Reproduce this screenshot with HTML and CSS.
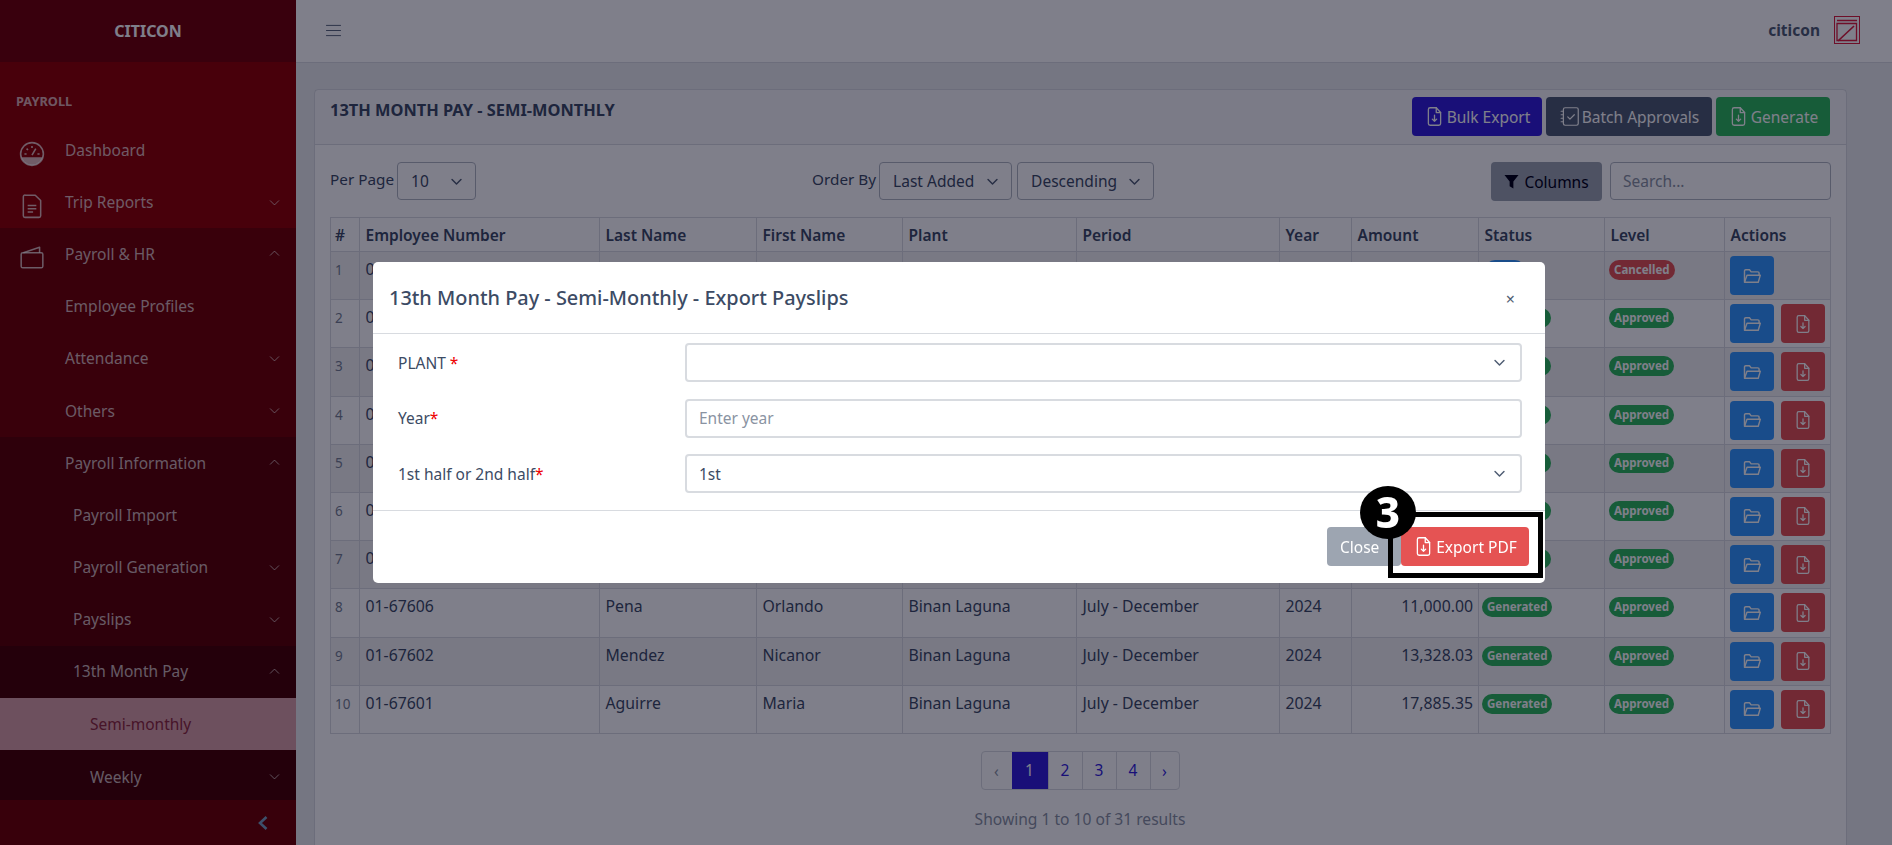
FILE: index.html
```html
<!DOCTYPE html>
<html lang="en">
<head>
<meta charset="utf-8">
<title>13th Month Pay - Semi-Monthly</title>
<link rel="stylesheet" href="styles.css">
</head>
<body>
<svg class="defs" aria-hidden="true">
  <symbol id="i-down" viewBox="0 0 16 16"><path d="M2.500 5.500 8 11l5.500-5.500" fill="none" stroke="currentColor" stroke-width="1.100"/></symbol>
  <symbol id="i-up" viewBox="0 0 16 16"><path d="M2.500 10.500 8 5l5.500 5.500" fill="none" stroke="currentColor" stroke-width="1.100"/></symbol>
  <symbol id="i-sel" viewBox="0 0 16 16"><path d="M2.500 5.500 8 11l5.500-5.500" fill="none" stroke="currentColor" stroke-width="1.800" stroke-linecap="round" stroke-linejoin="round"/></symbol>
  <symbol id="i-file" viewBox="0 0 24 24"><g fill="none" stroke="currentColor" stroke-width="1.500" stroke-linejoin="round" stroke-linecap="round"><path d="M7 2h7l5 5.500V20a2 2 0 0 1-2 2H7a2 2 0 0 1-2-2V4a2 2 0 0 1 2-2z"/><path d="M14 2v5.500h5"/><path d="M12 10.500v7M9.500 15l2.500 2.500 2.500-2.500"/></g></symbol>
  <symbol id="i-folder" viewBox="0 0 24 24"><g fill="none" stroke="currentColor" stroke-width="1.700" stroke-linejoin="round"><path d="M3 19V6a1.500 1.500 0 0 1 1.500-1.500H9l2 2.500h8a1.500 1.500 0 0 1 1.500 1.500V11"/><path d="M3 19.500 6 11h16l-2.500 8.500z"/></g></symbol>
</svg>

<div class="app">
  <aside class="sidebar">
    <div class="brand">CITICON</div>
    <nav class="nav">
      <div class="nav-title">PAYROLL</div>
      <a class="nav-item nav-top">
        <svg class="nav-icon" viewBox="0 0 24 24"><circle cx="12" cy="12" r="10.500" fill="none" stroke="currentColor" stroke-width="1.500"/><path d="M2 15h20a10.500 10.500 0 0 1-20 0z" fill="currentColor"/><path d="M12 13 15.500 7M5 12H7M12 4.500v2M19 12h-2M7 7l1.300 1.300" stroke="currentColor" stroke-width="1.500" fill="none"/></svg>
        <span class="nav-label">Dashboard</span>
      </a>
      <a class="nav-item nav-top">
        <svg class="nav-icon" viewBox="0 0 24 24"><g fill="none" stroke="currentColor" stroke-width="1.400" stroke-linejoin="round"><path d="M6 2h9l5 5v14a1.500 1.500 0 0 1-1.500 1.500h-13A1.500 1.500 0 0 1 4 21V3.500A1.500 1.500 0 0 1 6 2z"/><path d="M8 11.500h8M8 14.500h8M8 17.500h5"/></g></svg>
        <span class="nav-label">Trip Reports</span>
        <svg class="nav-chev"><use href="#i-down"/></svg>
      </a>
      <div class="nav-group">
        <a class="nav-item">
          <svg class="nav-icon" viewBox="0 0 24 24"><g fill="none" stroke="currentColor" stroke-width="1.400" stroke-linejoin="round"><rect x="2" y="8" width="20" height="14" rx="1.500"/><path d="M4 8 19 3v5"/></g></svg>
          <span class="nav-label">Payroll &amp; HR</span>
          <svg class="nav-chev"><use href="#i-up"/></svg>
        </a>
        <a class="nav-item"><span class="nav-label indent-1">Employee Profiles</span></a>
        <a class="nav-item"><span class="nav-label indent-1">Attendance</span><svg class="nav-chev"><use href="#i-down"/></svg></a>
        <a class="nav-item"><span class="nav-label indent-1">Others</span><svg class="nav-chev"><use href="#i-down"/></svg></a>
        <div class="nav-group">
          <a class="nav-item"><span class="nav-label indent-1">Payroll Information</span><svg class="nav-chev"><use href="#i-up"/></svg></a>
          <a class="nav-item"><span class="nav-label indent-2">Payroll Import</span></a>
          <a class="nav-item"><span class="nav-label indent-2">Payroll Generation</span><svg class="nav-chev"><use href="#i-down"/></svg></a>
          <a class="nav-item"><span class="nav-label indent-2">Payslips</span><svg class="nav-chev"><use href="#i-down"/></svg></a>
          <div class="nav-group">
            <a class="nav-item"><span class="nav-label indent-2">13th Month Pay</span><svg class="nav-chev"><use href="#i-up"/></svg></a>
            <a class="nav-item active"><span class="nav-label indent-3">Semi-monthly</span></a>
            <a class="nav-item nav-last"><span class="nav-label indent-3">Weekly</span><svg class="nav-chev"><use href="#i-down"/></svg></a>
          </div>
        </div>
      </div>
    </nav>
    <div class="side-foot">
      <svg class="side-toggle" viewBox="0 0 12 16"><path d="M9.500 2 3 8l6.500 6" fill="none" stroke="currentColor" stroke-width="2.600"/></svg>
    </div>
  </aside>

  <div class="main">
    <header class="topbar">
      <svg class="burger" viewBox="0 0 16 14"><path d="M0 1.500h16M0 7h16M0 12.500h16" stroke="currentColor" stroke-width="1"/></svg>
      <div class="top-right">
        <span class="top-user">citicon</span>
        <svg class="logo" viewBox="0 0 26 28"><g fill="none" stroke="#dc1e3c"><rect x=".5" y=".5" width="25" height="27" stroke-width="1"/><path d="M3 4.500h20M3 7.500h19.500V24.500H3z" stroke-width="1.300"/><path d="M4 25 20 10" stroke-width="1.700"/></g></svg>
      </div>
    </header>

    <div class="content">
      <section class="card">
        <div class="card-head">
          <h1 class="card-title">13TH MONTH PAY - SEMI-MONTHLY</h1>
          <div class="head-btns">
            <button class="btn btn-primary"><svg class="btn-icon"><use href="#i-file"/></svg>Bulk Export</button>
            <button class="btn btn-dark">
              <svg class="btn-icon" viewBox="0 0 24 24"><g fill="none" stroke="currentColor" stroke-width="1.400" stroke-linejoin="round" stroke-linecap="round"><rect x="5" y="2" width="17" height="20" rx="2"/><path d="M2.500 6h2M2.500 10h2M2.500 14h2M2.500 18h2"/><path d="m10 12.500 2.500 2.500 5-5"/></g></svg>
              Batch Approvals</button>
            <button class="btn btn-success"><svg class="btn-icon"><use href="#i-file"/></svg>Generate</button>
          </div>
        </div>
        <div class="card-body">
          <div class="toolbar">
            <div class="tool-group">
              <span class="tool-label">Per Page</span>
              <div class="mini-select sel-per"><span>10</span><svg class="sel-chev"><use href="#i-sel"/></svg></div>
            </div>
            <div class="tool-group tool-order">
              <span class="tool-label">Order By</span>
              <div class="mini-select sel-order"><span>Last Added</span><svg class="sel-chev"><use href="#i-sel"/></svg></div>
              <div class="mini-select sel-dir"><span>Descending</span><svg class="sel-chev"><use href="#i-sel"/></svg></div>
            </div>
            <div class="tool-group tool-right">
              <button class="btn btn-columns"><svg class="btn-icon funnel" viewBox="0 0 16 16"><path d="M.5 1h15L10 8v7.500L6 13V8z" fill="currentColor"/></svg>Columns</button>
              <div class="search">Search...</div>
            </div>
          </div>

          <table class="grid">
            <colgroup>
              <col class="c-num"><col class="c-emp"><col class="c-last"><col class="c-first"><col class="c-plant"><col class="c-period"><col class="c-year"><col class="c-amt"><col class="c-status"><col class="c-level"><col class="c-act">
            </colgroup>
            <thead>
              <tr><th class="th-num">#</th><th>Employee Number</th><th>Last Name</th><th>First Name</th><th>Plant</th><th>Period</th><th>Year</th><th>Amount</th><th>Status</th><th>Level</th><th>Actions</th></tr>
            </thead>
            <tbody>
              <tr><td class="idx">1</td><td>0</td><td></td><td></td><td></td><td></td><td></td><td></td><td class="pill-cell"><span class="pill pill-blue pill-stub-blue"></span></td><td class="pill-cell"><span class="pill pill-red">Cancelled</span></td><td class="actions"><button class="act act-blue"><svg><use href="#i-folder"/></svg></button></td></tr>
              <tr><td class="idx">2</td><td>0</td><td></td><td></td><td></td><td></td><td></td><td></td><td class="pill-cell"><span class="pill pill-green pill-stub"></span></td><td class="pill-cell"><span class="pill pill-green">Approved</span></td><td class="actions"><button class="act act-blue"><svg><use href="#i-folder"/></svg></button><button class="act act-red"><svg><use href="#i-file"/></svg></button></td></tr>
              <tr><td class="idx">3</td><td>0</td><td></td><td></td><td></td><td></td><td></td><td></td><td class="pill-cell"><span class="pill pill-green pill-stub"></span></td><td class="pill-cell"><span class="pill pill-green">Approved</span></td><td class="actions"><button class="act act-blue"><svg><use href="#i-folder"/></svg></button><button class="act act-red"><svg><use href="#i-file"/></svg></button></td></tr>
              <tr><td class="idx">4</td><td>0</td><td></td><td></td><td></td><td></td><td></td><td></td><td class="pill-cell"><span class="pill pill-green pill-stub"></span></td><td class="pill-cell"><span class="pill pill-green">Approved</span></td><td class="actions"><button class="act act-blue"><svg><use href="#i-folder"/></svg></button><button class="act act-red"><svg><use href="#i-file"/></svg></button></td></tr>
              <tr><td class="idx">5</td><td>0</td><td></td><td></td><td></td><td></td><td></td><td></td><td class="pill-cell"><span class="pill pill-green pill-stub"></span></td><td class="pill-cell"><span class="pill pill-green">Approved</span></td><td class="actions"><button class="act act-blue"><svg><use href="#i-folder"/></svg></button><button class="act act-red"><svg><use href="#i-file"/></svg></button></td></tr>
              <tr><td class="idx">6</td><td>0</td><td></td><td></td><td></td><td></td><td></td><td></td><td class="pill-cell"><span class="pill pill-green pill-stub"></span></td><td class="pill-cell"><span class="pill pill-green">Approved</span></td><td class="actions"><button class="act act-blue"><svg><use href="#i-folder"/></svg></button><button class="act act-red"><svg><use href="#i-file"/></svg></button></td></tr>
              <tr><td class="idx">7</td><td>0</td><td></td><td></td><td></td><td></td><td></td><td></td><td class="pill-cell"><span class="pill pill-green pill-stub"></span></td><td class="pill-cell"><span class="pill pill-green">Approved</span></td><td class="actions"><button class="act act-blue"><svg><use href="#i-folder"/></svg></button><button class="act act-red"><svg><use href="#i-file"/></svg></button></td></tr>
              <tr><td class="idx">8</td><td>01-67606</td><td>Pena</td><td>Orlando</td><td>Binan Laguna</td><td>July - December</td><td>2024</td><td class="amt">11,000.00</td><td class="pill-cell"><span class="pill pill-green">Generated</span></td><td class="pill-cell"><span class="pill pill-green">Approved</span></td><td class="actions"><button class="act act-blue"><svg><use href="#i-folder"/></svg></button><button class="act act-red"><svg><use href="#i-file"/></svg></button></td></tr>
              <tr><td class="idx">9</td><td>01-67602</td><td>Mendez</td><td>Nicanor</td><td>Binan Laguna</td><td>July - December</td><td>2024</td><td class="amt">13,328.03</td><td class="pill-cell"><span class="pill pill-green">Generated</span></td><td class="pill-cell"><span class="pill pill-green">Approved</span></td><td class="actions"><button class="act act-blue"><svg><use href="#i-folder"/></svg></button><button class="act act-red"><svg><use href="#i-file"/></svg></button></td></tr>
              <tr><td class="idx">10</td><td>01-67601</td><td>Aguirre</td><td>Maria</td><td>Binan Laguna</td><td>July - December</td><td>2024</td><td class="amt">17,885.35</td><td class="pill-cell"><span class="pill pill-green">Generated</span></td><td class="pill-cell"><span class="pill pill-green">Approved</span></td><td class="actions"><button class="act act-blue"><svg><use href="#i-folder"/></svg></button><button class="act act-red"><svg><use href="#i-file"/></svg></button></td></tr>
            </tbody>
          </table>

          <div class="pager-wrap">
            <div class="pager">
              <span class="pg pg-prev">‹</span><span class="pg pg-on">1</span><span class="pg">2</span><span class="pg">3</span><span class="pg">4</span><span class="pg pg-next">›</span>
            </div>
            <div class="pager-info">Showing 1 to 10 of 31 results</div>
          </div>
        </div>
      </section>
    </div>
  </div>
</div>

<div class="backdrop"></div>

<div class="modal">
  <div class="modal-head">
    <h2 class="modal-title">13th Month Pay - Semi-Monthly - Export Payslips</h2>
    <span class="modal-x">×</span>
  </div>
  <div class="modal-body">
    <div class="form-row">
      <label class="form-label">PLANT <b class="req">*</b></label>
      <div class="field"><span></span><svg class="sel-chev"><use href="#i-sel"/></svg></div>
    </div>
    <div class="form-row">
      <label class="form-label">Year<b class="req">*</b></label>
      <div class="field field-ph"><span>Enter year</span></div>
    </div>
    <div class="form-row">
      <label class="form-label">1st half or 2nd half<b class="req">*</b></label>
      <div class="field"><span>1st</span><svg class="sel-chev"><use href="#i-sel"/></svg></div>
    </div>
  </div>
  <div class="modal-foot">
    <button class="btn btn-close">Close</button>
    <button class="btn btn-danger"><svg class="btn-icon"><use href="#i-file"/></svg>Export PDF</button>
  </div>
  <div class="callout"></div>
  <div class="callout-num">3</div>
</div>
</body>
</html>
```
FILE: styles.css
```css
* { box-sizing: border-box; }
html, body { margin: 0; height: 845px; overflow: hidden; }
body {
  font-family: "Noto Sans", "Open Sans", sans-serif;
  font-size: 15.5px;
  line-height: 24px;
  color: #3c4b64;
  background: #ebedef;
}
.defs { display: none; }
.app { display: flex; height: 845px; overflow: hidden; }

/* sidebar */
.sidebar {
  width: 296px;
  flex: none;
  display: flex;
  flex-direction: column;
  background: #900000;
  color: rgba(255, 255, 255, .72);
  overflow: hidden;
}
.brand {
  height: 62px;
  flex: none;
  display: flex;
  align-items: center;
  justify-content: center;
  background: rgba(0, 0, 21, .2);
  color: #fff;
  font-weight: 700;
  font-size: 16px;
}
.nav { flex: 1; min-height: 0; overflow: hidden; }
.nav-title {
  height: 62px;
  padding: 27px 16px 0;
  font-size: 12.800px;
  font-weight: 700;
  color: rgba(255, 255, 255, .7);
}
.nav-item {
  height: 52.200px;
  display: flex;
  align-items: center;
  padding-bottom: 1px;
}
.nav-top { padding-bottom: 0; }
.nav-last { padding-top: 2px; }
.nav-icon {
  width: 26px;
  height: 26px;
  margin-left: 19px;
  margin-right: 20px;
  margin-top: 7px;
  flex: none;
}
.nav-label { flex: 1; }
.indent-1 { padding-left: 65px; }
.indent-2 { padding-left: 73px; }
.indent-3 { padding-left: 90px; }
.nav-chev { width: 13px; height: 13px; margin-right: 15px; flex: none; }
.nav-group { background: rgba(0, 0, 0, .2); }
.nav-item.active { background: #dba0a6; color: #8e2a3c; }
.side-foot {
  height: 45px;
  flex: none;
  display: flex;
  align-items: center;
  justify-content: flex-end;
  padding-right: 27px;
  background: #700000;
  color: #7aa0c0;
}
.side-toggle { width: 12px; height: 16px; }

/* main */
.main { flex: 1; min-width: 0; display: flex; flex-direction: column; height: 845px; overflow: hidden; }
.topbar {
  height: 63px;
  flex: none;
  background: #fff;
  border-bottom: 1px solid #d8dbe0;
  display: flex;
  align-items: center;
  justify-content: space-between;
  padding: 0 32px 2px 30px;
}
.burger { width: 15px; height: 13px; color: #4f5d73; }
.top-right { display: flex; align-items: center; gap: 14px; }
.top-user { font-weight: 700; font-size: 15.500px; color: #4f5d73; }
.logo { width: 26px; height: 28px; }
.content { flex: 1; min-height: 0; overflow: hidden; padding: 26px 45px 0 18px; }
.card { background: #fff; border: 1px solid #d8dbe0; border-radius: 4px 4px 0 0; height: 780px; }
.card-head {
  height: 55px;
  display: flex;
  justify-content: space-between;
  background: rgba(0, 0, 21, .03);
  border-bottom: 1px solid #d8dbe0;
  padding: 7px 16px 0;
}
.card-title { margin: 1px 0 0 -1px; font-size: 16.400px; font-weight: 700; line-height: 24px; color: #3c4b64; }
.head-btns { display: flex; gap: 4px; }
.btn {
  height: 39px;
  border: 1px solid transparent;
  border-radius: 4px;
  font: inherit;
  display: inline-flex;
  align-items: center;
  justify-content: center;
  gap: 2px;
  padding: 0;
  white-space: nowrap;
}
.btn-icon { width: 21px; height: 21px; flex: none; }
.btn-primary { background: #321fdb; color: #fff; width: 130px; }
.btn-dark { background: #4f5d73; color: #fff; width: 166px; }
.btn-success { background: #2eb85c; color: #fff; width: 114px; }
.btn-columns { background: #9da5b1; color: #000015; width: 111px; gap: 5px; }
.funnel { width: 15px; height: 15px; }
.btn-close { background: #9da5b1; color: #fff; width: 74px; justify-content: flex-start; padding-left: 12px; }
.btn-danger { background: #e55353; color: #fff; width: 128px; }
.card-body { padding: 17px 16px 0 15px; }
.toolbar { display: flex; height: 38px; }
.tool-group { display: flex; align-items: flex-start; }
.tool-label { margin-right: 3px; margin-top: 5px; font-size: 15.300px; }
.mini-select {
  height: 38px;
  border: 1px solid #b1b7c1;
  border-radius: 4px;
  display: flex;
  align-items: center;
  justify-content: space-between;
  padding: 0 12px 0 13px;
}
.sel-chev { width: 13px; height: 13px; flex: none; color: #4f5d73; }
.sel-per { width: 79px; }
.sel-order { width: 133px; }
.sel-dir { width: 137px; margin-left: 5px; }
.tool-order { margin-left: 336px; }
.tool-right { margin-left: auto; margin-right: -1px; }
.search {
  width: 221px;
  height: 38px;
  margin-left: 8px;
  border: 1px solid #b1b7c1;
  border-radius: 4px;
  padding: 6px 12px;
  color: #8a93a2;
  background: #fff;
}

/* table */
.grid {
  width: 1500px;
  margin-top: 17px;
  table-layout: fixed;
  border-collapse: collapse;
  border: 1px solid #d8dbe0;
}
.c-num { width: 29px; } .c-emp { width: 240px; } .c-last { width: 157px; } .c-first { width: 146px; }
.c-plant { width: 174px; } .c-period { width: 203px; } .c-year { width: 72px; } .c-amt { width: 127px; }
.c-status { width: 126px; } .c-level { width: 120px; } .c-act { width: 106px; }
.grid th, .grid td { border: 1px solid #d8dbe0; padding: 5px 4px 0 5.500px; vertical-align: top; text-align: left; white-space: nowrap; overflow: hidden; }
.grid th { height: 34px; font-weight: 600; }
.grid .th-num { padding-left: 4px; }
.grid td { height: 48.200px; font-size: 15.800px; }
.grid tbody tr:nth-child(odd) { background: rgba(0, 0, 21, .05); }
.grid .idx { color: #768192; font-size: 13.500px; padding: 6px 0 0 4px; }
.grid .amt { text-align: right; padding-right: 5px; }
.grid .pill-cell { padding: 8px 0 0 3px; }
.grid .pill-cell + .pill-cell { padding-left: 4px; }
.pill {
  display: inline-block;
  height: 20px;
  border-radius: 10px;
  padding: 0 5px;
  font-size: 11.500px;
  line-height: 19px;
  font-weight: 700;
  color: #fff;
  vertical-align: top;
}
.pill-green { background: #2eb85c; }
.pill-red { background: #e55353; }
.pill-blue { background: #39f; }
.pill-stub { width: 69px; }
.pill-stub-blue { width: 40px; margin-left: 3px; }
.grid .actions { padding: 4px 0 0 5px; }
.act {
  width: 44px;
  height: 39px;
  border: 0;
  border-radius: 4px;
  padding: 0;
  color: #fff;
  display: inline-flex;
  align-items: center;
  justify-content: center;
  vertical-align: top;
}
.act svg { width: 20px; height: 20px; }
.act-blue { background: #39f; }
.act-red { background: #e55353; margin-left: 7px; }

/* pager */
.pager-wrap { display: flex; flex-direction: column; align-items: center; padding-top: 17px; }
.pager { display: flex; height: 39px; border: 1px solid #d8dbe0; border-radius: 4px; }
.pg {
  width: 34px;
  display: flex;
  align-items: center;
  justify-content: center;
  color: #321fdb;
  border-left: 1px solid #d8dbe0;
}
.pg-prev { width: 30px; border-left: 0; color: #8a93a2; padding-top: 2px; }
.pg-next { width: 29px; padding-top: 2px; }
.pg-on { width: 36px; background: #321fdb; color: #fff; border-left: 0; }
.pager-info { margin-top: 17px; color: #8a93a2; font-size: 15.600px; }

/* overlay */
.backdrop { position: fixed; inset: 0; background: rgba(0, 0, 21, .5); }
.modal {
  position: fixed;
  left: 373px;
  top: 262px;
  width: 1172px;
  height: 321px;
  background: #fff;
  border-radius: 5px;
  display: flex;
  flex-direction: column;
}
.modal-head {
  height: 72px;
  flex: none;
  border-bottom: 1px solid #d8dbe0;
  display: flex;
  align-items: center;
  justify-content: space-between;
  padding: 0 30px 0 16px;
}
.modal-title { margin: 0; font-size: 19.900px; font-weight: 500; color: #3c4b64; }
.modal-x { font-size: 16px; color: #4f5d73; padding-top: 3px; }
.modal-body { flex: none; padding: 9px 23px 0 25px; height: 177px; border-bottom: 1px solid #d8dbe0; }
.form-row { display: flex; height: 39px; margin-bottom: 16.500px; align-items: center; }
.form-label { width: 287px; flex: none; }
.req { color: #e00; font-weight: 400; }
.field {
  flex: 1;
  height: 39px;
  border: 2px solid #d8dbe0;
  border-radius: 4px;
  display: flex;
  align-items: center;
  justify-content: space-between;
  padding: 0 14px 0 12px;
}
.field-ph { color: #8a93a2; }
.modal-foot { flex: 1; display: flex; justify-content: flex-end; align-items: flex-start; padding: 16px 16px 0 0; }
.callout {
  position: absolute;
  left: 1015px;
  top: 250px;
  width: 155px;
  height: 66px;
  border: 5px solid #000;
}
.callout-num {
  position: absolute;
  left: 987px;
  top: 224px;
  width: 56px;
  height: 53px;
  border-radius: 50%;
  background: #000;
  color: #fff;
  font-size: 42px;
  line-height: 52px;
  font-weight: 800;
  text-align: center;
}
```
